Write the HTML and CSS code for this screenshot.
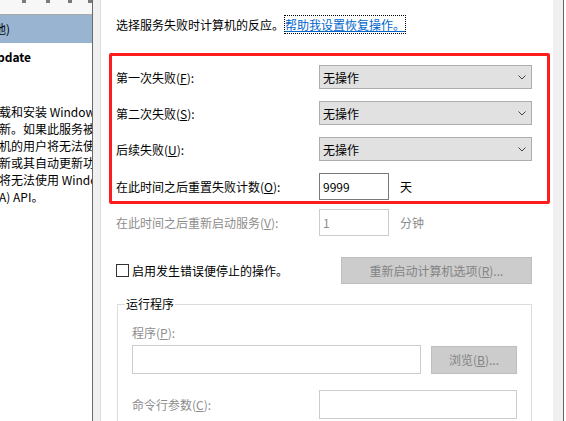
FILE: index.html
```html
<!DOCTYPE html>
<html lang="zh-CN">
<head>
<meta charset="utf-8">
<title>恢复</title>
<link rel="stylesheet" href="styles.css">
</head>
<body>
<div class="left">
  <div class="toolbar">
    <span class="tb-mark m1"></span><span class="tb-mark m2"></span><span class="tb-mark m3"></span><span class="tb-mark m4"></span>
  </div>
  <div class="selrow"><span class="clip-sel">(本地)</span></div>
  <div class="svc-title"><span class="clip-title">Update</span></div>
  <div class="desc">
    <div class="dline">载和安装 Windows 更新</div>
    <div class="dline">新。如果此服务被禁用</div>
    <div class="dline">机的用户将无法使用</div>
    <div class="dline">新或其自动更新功能</div>
    <div class="dline">将无法使用 Windows</div>
    <div class="dline">A) API。</div>
  </div>
</div>
<div class="divider"></div>
<div class="gap-l"></div>
<div class="page">
  <div class="intro">选择服务失败时计算机的反应。<a class="help" href="#">帮助我设置恢复操作。</a></div>

  <div class="redbox">
    <div class="row">
      <div class="lbl">第一次失败(<u>F</u>):</div>
      <div class="select"><span>无操作</span><svg class="chev" width="8" height="5" viewBox="0 0 8 5"><path d="M0.5 0.5 L4 4 L7.5 0.5" fill="none" stroke="#444" stroke-width="1"/></svg></div>
    </div>
    <div class="row">
      <div class="lbl">第二次失败(<u>S</u>):</div>
      <div class="select"><span>无操作</span><svg class="chev" width="8" height="5" viewBox="0 0 8 5"><path d="M0.5 0.5 L4 4 L7.5 0.5" fill="none" stroke="#444" stroke-width="1"/></svg></div>
    </div>
    <div class="row">
      <div class="lbl">后续失败(<u>U</u>):</div>
      <div class="select"><span>无操作</span><svg class="chev" width="8" height="5" viewBox="0 0 8 5"><path d="M0.5 0.5 L4 4 L7.5 0.5" fill="none" stroke="#444" stroke-width="1"/></svg></div>
    </div>
    <div class="row row-input">
      <div class="lbl">在此时间之后重置失败计数(<u>O</u>):</div>
      <div class="num">9999</div>
      <div class="unit">天</div>
    </div>
  </div>

  <div class="row row-input restart disabled">
    <div class="lbl">在此时间之后重新启动服务(<u>V</u>):</div>
    <div class="num num-dis">1</div>
    <div class="unit">分钟</div>
  </div>

  <div class="chkrow">
    <div class="chk"><span class="box"></span><span>启用发生错误便停止的操作。</span></div>
    <div class="btn btn-wide">重新启动计算机选项(<u>R</u>)...</div>
  </div>

  <div class="group disabled">
    <div class="gtitle">运行程序</div>
    <div class="plbl">程序(<u>P</u>):</div>
    <div class="prow">
      <div class="field f-prog"></div>
      <div class="btn btn-browse">浏览(<u>B</u>)...</div>
    </div>
    <div class="crow">
      <div class="clbl">命令行参数(<u>C</u>):</div>
      <div class="field f-cmd"></div>
    </div>
  </div>
</div>
<div class="gap-r"></div>
<div class="rdiv"></div>
<div class="rest"></div>
</body>
</html>
```
FILE: styles.css
```css
html, body {
  margin: 0;
  padding: 0;
}
body {
  width: 566px;
  height: 421px;
  overflow: hidden;
  display: flex;
  font-family: "Noto Sans CJK SC", "Microsoft YaHei", sans-serif;
  font-size: 12px;
  color: #000;
  background: #fff;
}

/* left services panel */
.left {
  width: 92px;
  flex: none;
  overflow: hidden;
  background: #fff;
}
.toolbar {
  height: 14px;
  background: #f7f7f7;
  border-bottom: 1px solid #a9a9a9;
  display: flex;
}
.tb-mark {
  width: 4px;
  height: 3px;
  background: #7a7a7a;
}
.m1 { margin-left: 22px; }
.m2 { margin-left: 20px; }
.m3 { margin-left: 18px; }
.m4 { margin-left: 16px; }
.selrow {
  height: 28px;
  line-height: 28px;
  background: #99b4d1;
  white-space: nowrap;
  overflow: hidden;
}
.clip-sel {
  display: inline-block;
  margin-left: -22px;
}
.svc-title {
  margin-top: 5px;
  height: 17px;
  line-height: 17px;
  font-weight: bold;
  white-space: nowrap;
  overflow: hidden;
}
.clip-title {
  display: inline-block;
  margin-left: -12px;
}
.desc {
  margin-top: 38px;
}
.dline {
  height: 17px;
  line-height: 17px;
  white-space: nowrap;
  overflow: hidden;
  margin-left: -1px;
}

.divider {
  width: 1px;
  flex: none;
  background: #6a6a6a;
}
.gap-l {
  width: 7px;
  flex: none;
  background: #f0f0f0;
}
.page {
  flex: none;
  width: 453px;
  height: 421px;
  overflow: hidden;
  border-left: 1px solid #dcdcdc;
  background: #fff;
  padding: 16px 0 0 8px;
  box-sizing: border-box;
}
.gap-r {
  width: 10px;
  flex: none;
  background: #f0f0f0;
}
.rdiv {
  width: 1px;
  flex: none;
  background: #646464;
}
.rest {
  flex: 1;
  background: #fff;
}

/* intro */
.intro {
  margin-left: 7px;
  height: 18px;
  line-height: 18px;
  white-space: nowrap;
}
.help {
  color: #0066cc;
  text-decoration: underline;
  outline: 1px dotted #000;
  outline-offset: 0;
  margin-left: 1px;
}

/* red annotation box */
.redbox {
  margin-top: 19px;
  width: 441px;
  box-sizing: border-box;
  border: 3px solid #ff1c1c;
  border-radius: 2px;
  padding: 9px 15px 1px 4px;
  display: flex;
  flex-direction: column;
  gap: 12px;
}
.row {
  display: flex;
  align-items: center;
  height: 24px;
}
.row-input {
  height: 27px;
}
.lbl {
  width: 203px;
  flex: none;
  white-space: nowrap;
}
.select {
  flex: 1;
  height: 24px;
  box-sizing: border-box;
  background: #e1e1e1;
  border: 1px solid #adadad;
  display: flex;
  align-items: center;
  justify-content: space-between;
  padding: 0 5px 0 3px;
}
.chev {
  display: block;
}
.num {
  width: 70px;
  height: 27px;
  box-sizing: border-box;
  border: 1px solid #7a7a7a;
  padding-left: 3px;
  line-height: 25px;
}
.unit {
  margin-left: 11px;
}
.restart {
  margin-top: 5px;
  margin-left: 7px;
}
.disabled {
  color: #8d8d8d;
}
.num-dis {
  border-color: #cccccc;
}

/* checkbox row */
.chkrow {
  margin-top: 21px;
  margin-left: 7px;
  width: 416px;
  display: flex;
  justify-content: space-between;
  align-items: center;
}
.chk {
  display: flex;
  align-items: center;
  gap: 3px;
}
.box {
  width: 13px;
  height: 13px;
  box-sizing: border-box;
  border: 1px solid #333;
  background: #fff;
}
.btn {
  box-sizing: border-box;
  background: #cccccc;
  border: 1px solid #bfbfbf;
  color: #838383;
  display: flex;
  align-items: center;
  justify-content: center;
}
.btn-wide {
  width: 191px;
  height: 27px;
}

/* group box */
.group {
  margin-top: 20px;
  margin-left: 8px;
  width: 415px;
  height: 140px;
  box-sizing: border-box;
  border: 1px solid #dcdcdc;
  padding: 0 14px;
}
.gtitle {
  width: fit-content;
  height: 16px;
  margin-top: -9px;
  margin-left: -7px;
  padding: 0 1px;
  background: #fff;
  line-height: 16px;
  color: #000;
}
.plbl {
  margin-top: 13px;
  line-height: 16px;
}
.prow {
  margin-top: 4px;
  display: flex;
  align-items: center;
  gap: 10px;
}
.field {
  height: 29px;
  box-sizing: border-box;
  border: 1px solid #cccccc;
  background: #fff;
}
.f-prog {
  width: 289px;
}
.btn-browse {
  width: 86px;
  height: 28px;
}
.crow {
  margin-top: 16px;
  display: flex;
  align-items: center;
}
.clbl {
  width: 187px;
  flex: none;
}
.f-cmd {
  width: 198px;
}
```
